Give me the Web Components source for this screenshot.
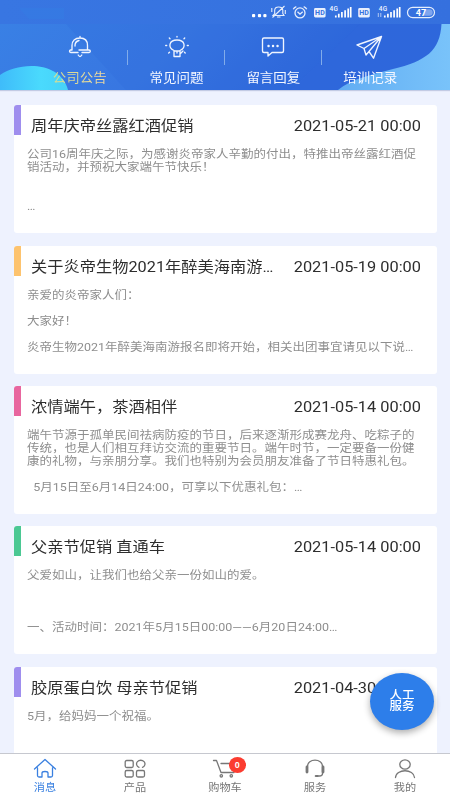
<!DOCTYPE html>
<html lang="zh-CN">
<head>
<meta charset="utf-8">
<title>消息</title>
<style>
html,body{margin:0;padding:0;background:#fff}
body{font-family:Roboto,"Noto Sans CJK SC",sans-serif;width:450px;height:800px;overflow:hidden}
</style>
</head>
<body>
<message-app></message-app>
<script>
const define = (name, html, setup) => customElements.define(name, class extends HTMLElement {
  connectedCallback() {
    if (this.shadowRoot) return;
    const t = document.createElement('template');
    t.innerHTML = html;
    this.attachShadow({mode: 'open'}).append(t.content.cloneNode(true));
    if (setup) setup(this, this.shadowRoot);
  }
});

define('status-bar', `<style>
:host{display:block;height:24px;background:linear-gradient(90deg,#3876e2,#3570de)}
svg{display:block}
text{font-family:Roboto,sans-serif}
</style>
<svg width="450" height="24" fill="none" stroke="#e6eefc" stroke-width="1.1">
<path d="M19 8H64V19H29Z" fill="#347be3" stroke="none" opacity=".55"/>
<g fill="#fff" stroke="none"><rect x="252" y="14" width="3.2" height="3.2" rx="1"/><rect x="257.900" y="14" width="3.200" height="3.200" rx="1"/><rect x="263.300" y="14" width="3.200" height="3.200" rx="1"/></g>
<path d="M273 15.500H284L282.800 13.500V10Q282.500 7 278.600 7Q275 7 274.700 10V13.500ZM277 17H280.500M272.500 17.500L284.500 6M271.800 8V12M285.300 10V14"/>
<g stroke-width="1.300"><circle cx="300" cy="12.900" r="5"/><path d="M297.500 11.800L300 14.200L302.700 11.800M293.300 9.300Q294 7.300 296.300 6.600M303.700 6.600Q306 7.300 306.700 9.300"/></g>
<g stroke="none" fill="#e9f0fd"><rect x="314" y="8" width="11.600" height="9.400" rx="1.400"/><rect x="358.200" y="8" width="11.600" height="9.400" rx="1.400"/></g>
<g stroke="none" fill="#3672df" font-size="7" font-weight="700"><text x="315" y="15.200" textLength="9.700">HD</text><text x="359.200" y="15.200" textLength="9.700">HD</text></g>
<g stroke="none" fill="#f2f6ff" font-size="6.500" font-weight="500"><text x="329.500" y="10.800" textLength="8.500">4G</text><text x="378.700" y="10.800" textLength="8.500">4G</text></g>
<g stroke="#fff" stroke-width="1.700"><path d="M335.800 17.500V15.500M338.800 17.500V13.800M341.900 17.500V12M345.100 17.500V10.300M348.200 17.500V8.500M350.700 17.500V7"/>
<path d="M384.800 17.500V15.500M387.900 17.500V13.800M391 17.500V12M394.100 17.500V10.300M397.200 17.500V8.500M399.700 17.500V7"/></g>
<path d="M378.300 13V17M380.800 13V17" stroke-width=".7"/>
<rect x="407.500" y="7.300" width="27" height="10.400" rx="5.200" stroke-width="1.200"/>
<path d="M424 9.300H429.500A3.200 3.200 0 0 1 429.500 15.700H424Z" fill="#7fa5ee" stroke="none"/>
<text x="415.800" y="15.700" font-size="9" font-weight="700" fill="#fff" stroke="none">47</text>
</svg>`);

define('top-tab', `<style>
:host{display:flex;flex-direction:column;align-items:center;width:96.800px;height:66px;position:relative;color:#f4f7ff;flex:none}
:host([active]) span{background:linear-gradient(90deg,#d3dd92,#f0d9a0);-webkit-background-clip:text;background-clip:text;color:transparent}
:host(:not(:last-child))::after{content:"";position:absolute;right:0;top:26px;height:15px;width:1px;background:#82acea}
::slotted(svg){display:block;margin-top:9px;width:28px;height:28px;fill:none;stroke:#f0f5ff;stroke-width:1.35;stroke-linecap:round;stroke-linejoin:round}
span{font-size:13.500px;line-height:18px;margin-top:7px;transform:scaleY(.94);white-space:nowrap}
</style><slot></slot><span></span>`, (h, r) => r.querySelector('span').textContent = h.getAttribute('label'));

define('top-tabs', `<style>
:host{display:flex;box-sizing:border-box;padding-left:31.400px;height:66px;position:relative;background:linear-gradient(135deg,#3980e5 0%,#3876e1 38%,#2e67db 70%,#2e67dc);box-shadow:0 1px 1px #c3cbe4;z-index:1}
.art{position:absolute;inset:0}
</style>
<svg class="art" width="450" height="66"><defs><linearGradient id="a"><stop stop-color="#3fbcfa"/><stop offset=".6" stop-color="#4adafd"/><stop offset="1" stop-color="#46d2f8"/></linearGradient><linearGradient id="b"><stop stop-color="#62adf3"/><stop offset="1" stop-color="#79c3fa"/></linearGradient></defs>
<path d="M66 0L126 66H290L360 0Z" fill="#2c68da" opacity=".22"/>
<path d="M0 51C18 38 60 36 68 66H0Z" fill="url(#a)"/>
<path d="M441.500 0C440 27 426 37 393 45C370 51 351 55 338 66H450V0Z" fill="url(#b)"/></svg>
<top-tab active label="公司公告"><svg viewBox="0 0 28 28"><path d="M6 17V12.500C6 8 9 5 14 5S21.500 8 21.500 12.500V17M14 5V3.500M6 17H4.500Q3.500 17.300 3.500 18.300T4.800 19.500H12M16 19.500H23Q24.300 19.300 24.300 18.200T23 17H13M9 13Q8.800 8.500 13 7.500M12.200 22Q14 25 15.800 22"/></svg></top-tab>
<top-tab label="常见问题"><svg viewBox="0 0 28 28"><path d="M11 17.500C4.500 14.500 6 7 14 7S23.500 14.500 17 17.500M11 18H17V23.500H11ZM14 20V18M14 3.300V4M6.300 5L7 5.700M21.700 5L21 5.700M2.700 12.500H3.700M24.300 12.500H25.300M5.700 20L6.500 19.300M22.200 20L21.500 19.300M17 21L20 18"/></svg></top-tab>
<top-tab label="留言回复"><svg viewBox="0 0 28 28"><path d="M5 5H23Q24.500 5 24.500 6.500V18Q24.500 19.500 23 19.500H13L9 23V19.500H5Q3.500 19.500 3.500 18V6.500Q3.500 5 5 5Z"/><path d="M9.500 13H9.600M14 13H14.100M18.500 13H18.600" stroke-width="2.400"/></svg></top-tab>
<top-tab label="培训记录"><svg viewBox="0 0 28 28"><path d="M25.500 3.500L1 12L8 15.500L10 22L13 18.500L17.500 25.200ZM25.500 3.500L8 15.500M25.500 3.500L13 18.500"/></svg></top-tab>`);

define('notice-card', `<style>
:host{display:block;height:128px;background:#fff;border-radius:3px;flex:none;overflow:hidden}
header{display:flex;align-items:flex-start;height:42px}
i{width:7.400px;height:30px;background:var(--accent);flex:none}
h2,time{font-size:16.250px;line-height:22px;font-weight:400;margin:10px 0 0;color:#2e2e2e;transform:scaleY(.94);white-space:nowrap}
h2{margin-left:9.600px;width:245px;overflow:hidden;flex:none}
time{margin-left:auto;margin-right:15.500px;font-size:16.350px}
p{margin:1px 0 0 13px;font-size:12.500px;line-height:13.980px;color:#8e8e8e;transform:scaleY(.93);transform-origin:0 0;white-space:pre;font-weight:400}
</style><header><i></i><h2></h2><time></time></header><p><slot></slot></p>`, (h, r) => {
  r.querySelector('h2').textContent = h.getAttribute('heading');
  r.querySelector('time').textContent = h.getAttribute('date');
});

define('service-button', `<style>
:host{position:absolute;left:370px;top:672.500px;width:64px;height:57px;border-radius:50%;background:#2d7eea;box-shadow:0 3px 7px rgba(0,0,0,.32);display:grid;place-content:center;color:#fff;z-index:2;text-align:center}
div{font-size:12.500px;line-height:12.400px;font-weight:500;transform:scaleY(.92)}
</style><div>人工<br>服务</div>`);

define('nav-item', `<style>
:host{display:flex;flex-direction:column;align-items:center;flex:1;color:#777;position:relative}
:host([active]){color:#3a80e0}
::slotted(svg){display:block;width:26px;height:24px;margin-top:3px;fill:none;stroke:currentColor;stroke-width:1.300;stroke-linejoin:round;stroke-linecap:round}
span{font-size:11.200px;line-height:14px;transform:scaleY(.95)}
b{position:absolute;left:48.500px;top:2.500px;width:17.500px;height:16px;border-radius:50%;background:#fb3c30;color:#fff;font:700 9px/16px "Liberation Sans",sans-serif;text-align:center}
</style><slot></slot><span></span>`, (h, r) => {
  r.querySelector('span').textContent = h.getAttribute('label');
  if (h.hasAttribute('badge')) {
    const b = document.createElement('b');
    b.textContent = h.getAttribute('badge');
    r.append(b);
  }
});

define('bottom-nav', `<style>
:host{display:flex;height:46px;border-top:1px solid #c6c8cf;background:#fff;flex:none}
</style>
<nav-item active label="消息"><svg viewBox="0 0 26 24"><path d="M2.500 12L13 2.500L23.500 12M5.500 11V18.500Q5.500 20 7 20H10V16Q10 14.500 13 14.500T16 16V20H19Q20.500 20 20.500 18.500V11"/></svg></nav-item>
<nav-item label="产品"><svg viewBox="0 0 26 24"><rect x="3.200" y="3.500" width="8" height="7" rx="1.500"/><rect x="3.200" y="13.500" width="8" height="6.500" rx="1.500"/><rect x="14.500" y="13.500" width="8" height="6.500" rx="1.500"/><path d="M17 10.300A4.200 3.700 0 1 1 20.500 10.300"/></svg></nav-item>
<nav-item label="购物车" badge="0"><svg viewBox="0 0 26 24"><path d="M1.500 3.500H4.500L9 15.500H22M9 6.500H22L20.500 12"/><circle cx="9.300" cy="18.800" r="1.200"/><circle cx="19.300" cy="18.800" r="1.200"/></svg></nav-item>
<nav-item label="服务"><svg viewBox="0 0 26 24"><path d="M5.500 10V9.500C5.500 1 20.500 1 20.500 9.500V16.500Q20.500 19 17.500 19H15"/><path d="M5 10V15M21 10V15" stroke-width="2.800"/><path d="M13.800 19H15.500" stroke-width="2.200"/></svg></nav-item>
<nav-item label="我的"><svg viewBox="0 0 26 24"><ellipse cx="13" cy="7.500" rx="5.200" ry="4.700"/><path d="M3.500 20.500C4 11.500 22 11.500 22.500 20.500"/></svg></nav-item>`);

define('message-app', `<style>
:host{display:flex;flex-direction:column;width:450px;height:800px;position:relative;background:#eef2fe;overflow:hidden}
main{flex:1;min-height:0;overflow:hidden;display:flex;flex-direction:column;gap:12.400px;padding:15.300px 13.500px 0 14px}
</style>
<status-bar></status-bar><top-tabs></top-tabs>
<main>
<notice-card style="--accent:#9f8eee" heading="周年庆帝丝露红酒促销" date="2021-05-21 00:00">公司16周年庆之际，为感谢炎帝家人辛勤的付出，特推出帝丝露红酒促
销活动，并预祝大家端午节快乐！


…</notice-card>
<notice-card style="--accent:#fdc36e" heading="关于炎帝生物2021年醉美海南游…" date="2021-05-19 00:00">亲爱的炎帝家人们：

大家好！

炎帝生物2021年醉美海南游报名即将开始，相关出团事宜请见以下说…</notice-card>
<notice-card style="--accent:#e8669f" heading="浓情端午，茶酒相伴" date="2021-05-14 00:00">端午节源于孤单民间祛病防疫的节日，后来逐渐形成赛龙舟、吃粽子的
传统，也是人们相互拜访交流的重要节日。端午时节，一定要备一份健
康的礼物，与亲朋分享。我们也特别为会员朋友准备了节日特惠礼包。

&nbsp; 5月15日至6月14日24:00，可享以下优惠礼包：…</notice-card>
<notice-card style="--accent:#4bc893" heading="父亲节促销 直通车" date="2021-05-14 00:00">父爱如山，让我们也给父亲一份如山的爱。



一、活动时间：2021年5月15日00:00——6月20日24:00…</notice-card>
<notice-card style="--accent:#9f8eee" heading="胶原蛋白饮 母亲节促销" date="2021-04-30 00:00">5月，给妈妈一个祝福。</notice-card>
</main>
<bottom-nav></bottom-nav><service-button></service-button>`);
</script>
</body>
</html>
